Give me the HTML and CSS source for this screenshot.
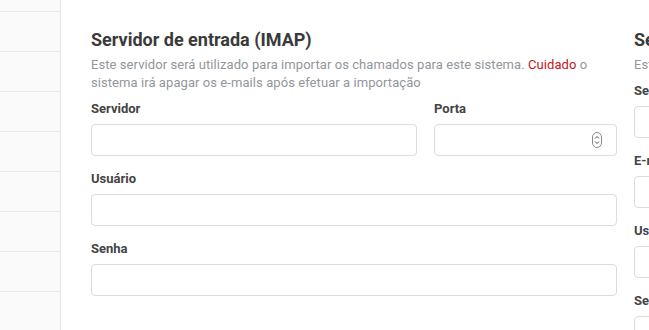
FILE: index.html
```html
<!DOCTYPE html>
<html lang="pt-BR">
<head>
  <meta charset="UTF-8">
  <title>Configurações de e-mail</title>
  <link rel="stylesheet" href="styles.css">
</head>
<body>
  <aside class="sidebar">
    <ul class="menu">
      <li></li>
      <li></li>
      <li></li>
      <li></li>
      <li></li>
      <li></li>
      <li></li>
      <li></li>
    </ul>
  </aside>

  <main class="main">
    <div class="columns">
      <section class="box">
        <h2>Servidor de entrada (IMAP)</h2>
        <p class="help">Este servidor será utilizado para importar os chamados para este sistema. <span class="warn">Cuidado</span> o sistema irá apagar os e-mails após efetuar a importação</p>

        <div class="row">
          <div class="field">
            <label>Servidor</label>
            <input type="text">
          </div>
          <div class="field">
            <label>Porta</label>
            <div class="number-wrap">
              <input type="number">
              <span class="stepper">
                <svg width="6" height="12" viewBox="0 0 6 12"><path d="M1 4.5 L3 2.5 L5 4.5 M1 7.5 L3 9.5 L5 7.5" fill="none" stroke="#555" stroke-width="1"/></svg>
              </span>
            </div>
          </div>
        </div>

        <div class="field">
          <label>Usuário</label>
          <input type="text">
        </div>

        <div class="field">
          <label>Senha</label>
          <input type="password">
        </div>
      </section>

      <section class="box">
        <h2>Servidor de saída (SMTP)</h2>
        <p class="help">Este servidor será utilizado para enviar os e-mails.</p>

        <div class="field">
          <label>Servidor</label>
          <input type="text">
        </div>

        <div class="field">
          <label>E-mail</label>
          <input type="text">
        </div>

        <div class="field">
          <label>Usuário</label>
          <input type="text">
        </div>

        <div class="field">
          <label>Senha</label>
          <input type="password">
        </div>
      </section>
    </div>
  </main>
</body>
</html>
```

FILE: styles.css
```css
* {
  box-sizing: border-box;
}
body {
  margin: 0;
  display: flex;
  height: 330px;
  overflow: hidden;
  font-family: Roboto, "Liberation Sans", sans-serif;
  background: #ffffff;
  color: #444;
}
.sidebar {
  width: 61px;
  flex-shrink: 0;
  background: #fafafa;
  border-right: 1px solid #e6e6e6;
}
.menu {
  list-style: none;
  margin: 11px 0 0;
  padding: 0;
}
.menu li {
  height: 40px;
  border-top: 1px solid #e8e8e8;
}
.main {
  flex: 1;
  padding: 28px 0 0 30px;
  overflow: hidden;
}
.columns {
  display: grid;
  grid-template-columns: 526px 526px;
  gap: 17px;
}
h2 {
  margin: 0;
  font-size: 18px;
  line-height: 24px;
  font-weight: 700;
  color: #3a3a3a;
  white-space: nowrap;
}
.help {
  margin: 4px 0 8px;
  font-size: 13px;
  line-height: 18px;
  letter-spacing: 0.07px;
  color: #92969d;
}
.warn {
  color: #c4161c;
}
.row {
  display: grid;
  grid-template-columns: 1fr 183px;
  gap: 17px;
}
.field {
  margin-bottom: 14px;
}
.field label {
  display: block;
  height: 18px;
  margin-bottom: 6px;
  font-size: 13px;
  line-height: 18px;
  font-weight: 700;
  color: #444;
}
.field input {
  display: block;
  width: 100%;
  height: 32px;
  padding: 0 10px;
  font-family: inherit;
  font-size: 13px;
  background: #fff;
  border: 1px solid #dcdcdc;
  border-radius: 4px;
}
.number-wrap {
  position: relative;
}
.number-wrap input::-webkit-inner-spin-button,
.number-wrap input::-webkit-outer-spin-button {
  -webkit-appearance: none;
  margin: 0;
}
.stepper {
  position: absolute;
  right: 15px;
  top: 8px;
  width: 10px;
  height: 16px;
  border: 1px solid #8a8a8a;
  border-radius: 5px;
  display: flex;
  align-items: center;
  justify-content: center;
}
.stepper svg {
  display: block;
}
```
